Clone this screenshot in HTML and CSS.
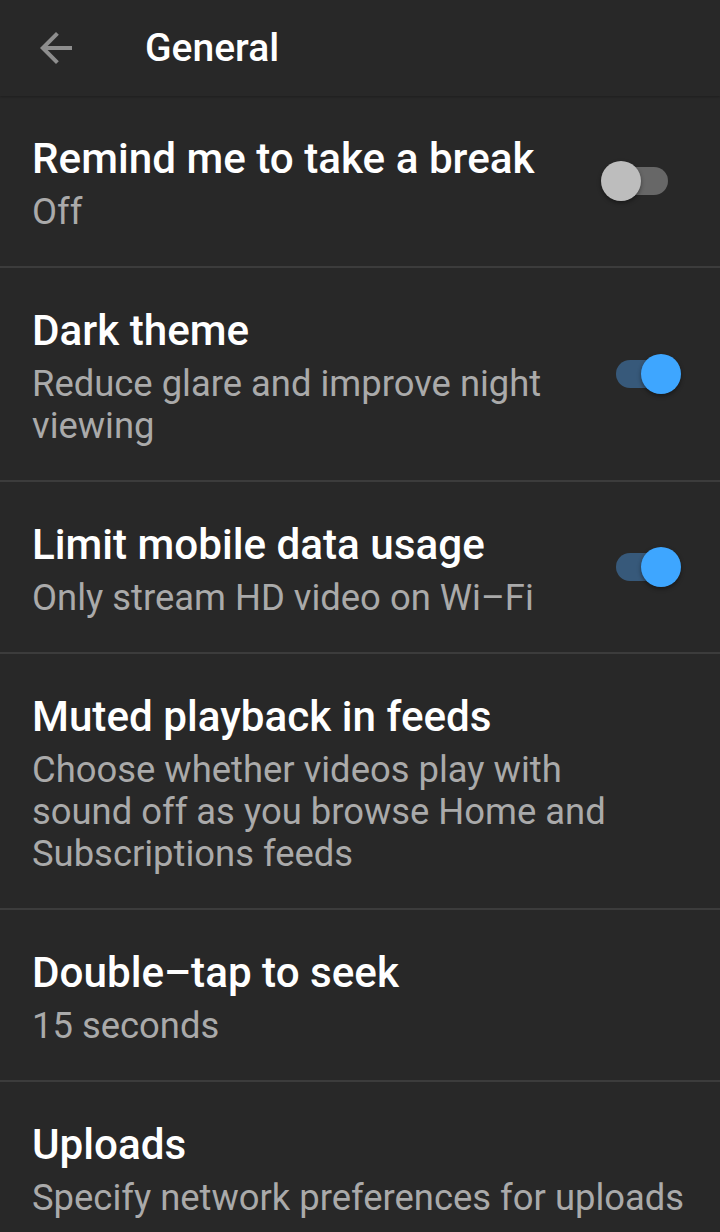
FILE: index.html
```html
<!DOCTYPE html>
<html lang="en">
<head>
  <meta charset="UTF-8">
  <meta name="viewport" content="width=720, initial-scale=1.0">
  <title>General</title>
  <link rel="stylesheet" href="styles.css">
</head>
<body>
  <header class="topbar">
    <button class="back-btn" aria-label="Back">
      <svg viewBox="0 0 24 24" width="48" height="48"><path d="M20 11H7.83l5.59-5.59L12 4l-8 8 8 8 1.41-1.41L7.83 13H20v-2z" fill="currentColor"/></svg>
    </button>
    <h1>General</h1>
  </header>

  <ul class="settings">
    <li class="row">
      <div class="text">
        <div class="title">Remind me to take a break</div>
        <div class="sub">Off</div>
      </div>
      <span class="switch"></span>
    </li>
    <li class="row">
      <div class="text">
        <div class="title">Dark theme</div>
        <div class="sub">Reduce glare and improve night viewing</div>
      </div>
      <span class="switch on"></span>
    </li>
    <li class="row">
      <div class="text">
        <div class="title">Limit mobile data usage</div>
        <div class="sub">Only stream HD video on Wi–Fi</div>
      </div>
      <span class="switch on"></span>
    </li>
    <li class="row">
      <div class="text">
        <div class="title">Muted playback in feeds</div>
        <div class="sub narrow">Choose whether videos play with sound off as you browse Home and Subscriptions feeds</div>
      </div>
    </li>
    <li class="row">
      <div class="text">
        <div class="title">Double–tap to seek</div>
        <div class="sub">15 seconds</div>
      </div>
    </li>
    <li class="row">
      <div class="text">
        <div class="title">Uploads</div>
        <div class="sub">Specify network preferences for uploads</div>
      </div>
    </li>
  </ul>
</body>
</html>
```

FILE: styles.css
```css
body {
  margin: 0;
  background-color: #282828;
  font-family: Roboto, "Noto Sans", Arial, sans-serif;
  color: #fff;
}
.topbar {
  display: flex;
  align-items: center;
  height: 96px;
  padding-left: 32px;
  background-color: #282828;
  box-shadow: 0 1px 2px rgba(0,0,0,0.25);
  position: relative;
}
.back-btn {
  display: flex;
  padding: 0;
  border: none;
  background: none;
  color: #8e8e8e;
  cursor: pointer;
}
.topbar h1 {
  margin: 0 0 0 65px;
  font-size: 39px;
  font-weight: 500;
}
.settings {
  list-style: none;
  margin: 0;
  padding: 0;
}
.row {
  display: flex;
  align-items: center;
  padding: 39px 24px 33px 32px;
  border-bottom: 2px solid #3c3c3c;
}
.text {
  flex: 1;
}
.title {
  font-size: 42.2px;
  font-weight: 500;
  line-height: 48px;
  margin-bottom: 8px;
}
.sub {
  font-size: 36.4px;
  line-height: 42px;
  color: #aaaaaa;
}
.sub.narrow {
  max-width: 610px;
}
.switch {
  position: relative;
  flex: none;
  width: 80px;
  height: 40px;
  margin: -6px 15px 0 24px;
}
.switch::before {
  content: "";
  position: absolute;
  left: 15px;
  top: 6px;
  width: 52px;
  height: 28px;
  border-radius: 14px;
  background-color: #676767;
}
.switch::after {
  content: "";
  position: absolute;
  left: 0;
  top: 0;
  width: 40px;
  height: 40px;
  border-radius: 50%;
  background-color: #bdbdbd;
  box-shadow: 0 2px 4px rgba(0,0,0,0.4);
}
.switch.on::before {
  background-color: #37597a;
}
.switch.on::after {
  left: 40px;
  background-color: #3ea6ff;
}
```
